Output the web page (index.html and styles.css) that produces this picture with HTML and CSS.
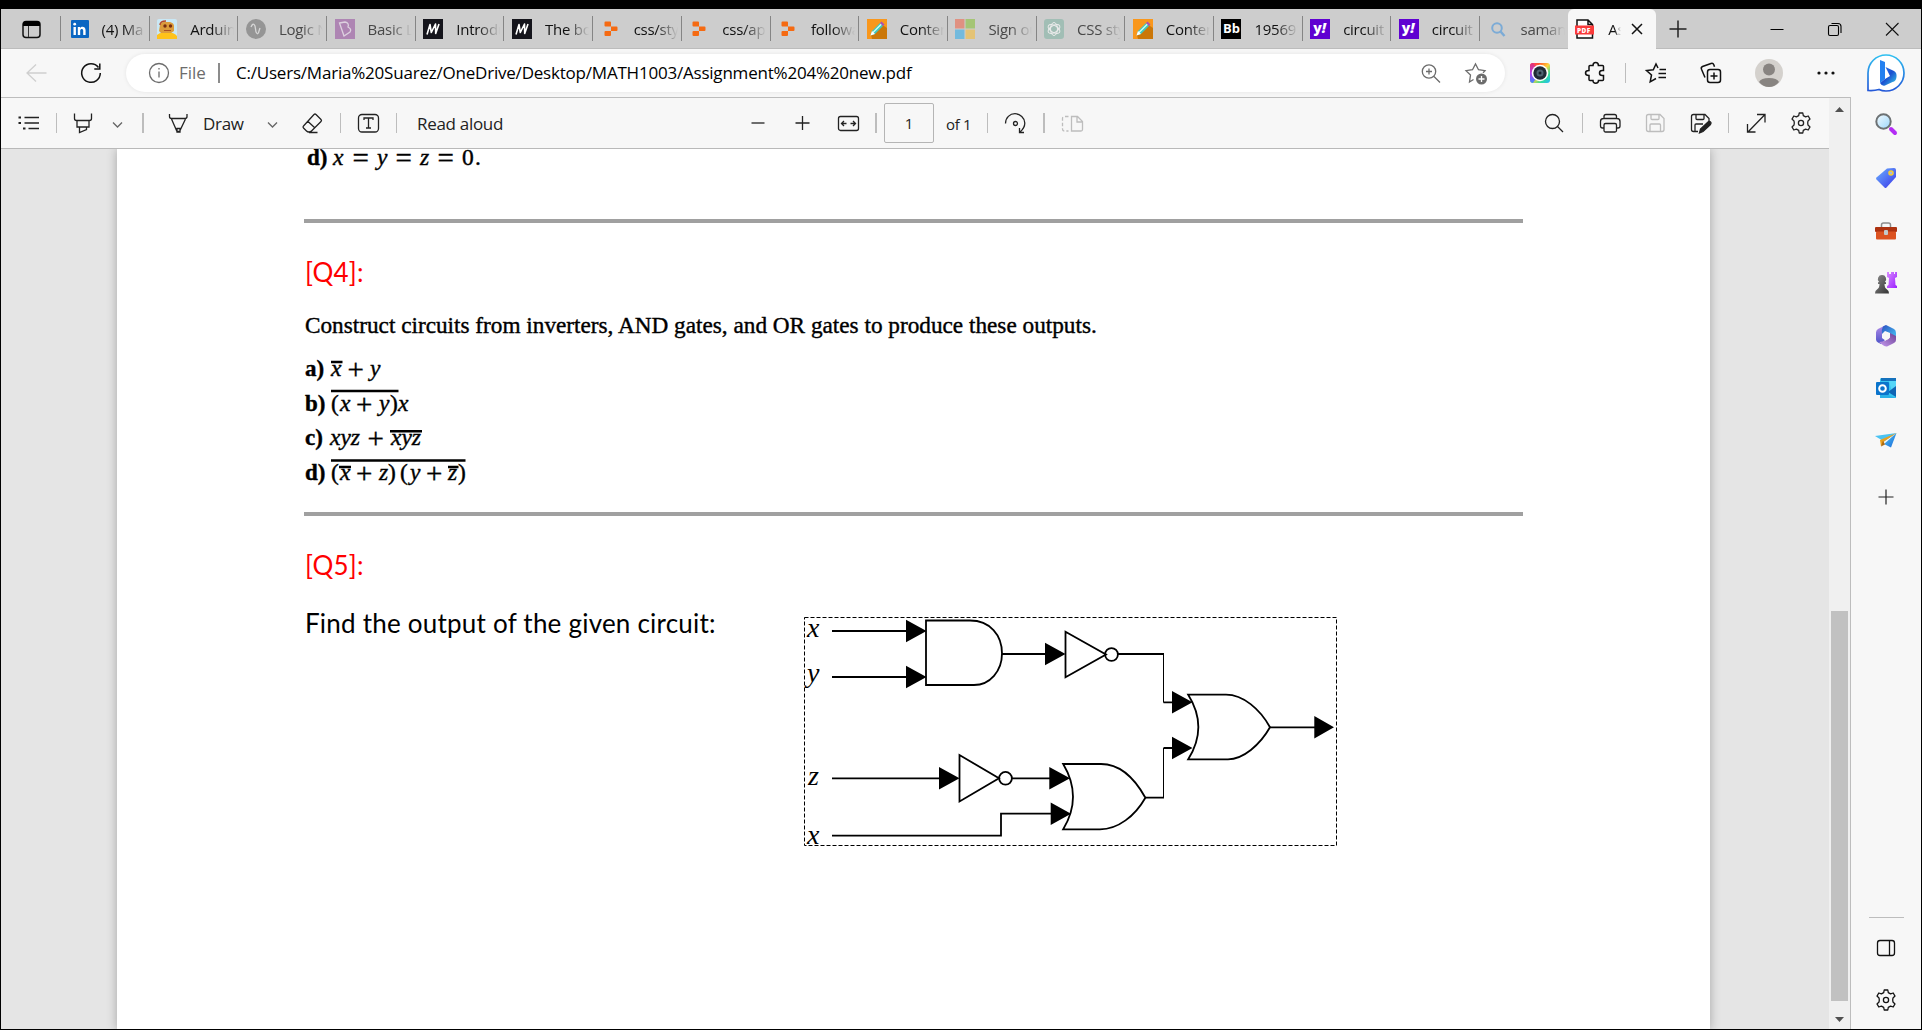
FILE: index.html
```html
<!DOCTYPE html>
<html lang="en">
<head>
<meta charset="utf-8">
<title>Assignment 4 new.pdf</title>
<link rel="stylesheet" href="styles.css">
</head>
<body>
<svg class="defs" width="0" height="0" aria-hidden="true">
  <defs>
    <linearGradient id="g-bing" x1="0" y1="0" x2="0" y2="1"><stop offset="0" stop-color="#2fc0f0"/><stop offset="1" stop-color="#2458d8"/></linearGradient>
    <linearGradient id="g-b" x1="0" y1="0" x2="1" y2="1"><stop offset="0" stop-color="#2a7df0"/><stop offset=".5" stop-color="#1b50d0"/><stop offset="1" stop-color="#38d0e8"/></linearGradient>
    <linearGradient id="g-cam" x1="0" y1="0" x2="1" y2="1"><stop offset="0" stop-color="#ff2b8a"/><stop offset=".25" stop-color="#ff5a2a"/><stop offset=".5" stop-color="#ffd23a"/><stop offset=".75" stop-color="#33dd9a"/><stop offset="1" stop-color="#22b8ff"/></linearGradient>
    <linearGradient id="g-camside" x1="0" y1="0" x2="0" y2="1"><stop offset="0" stop-color="#e8336a"/><stop offset=".55" stop-color="#b040f0"/><stop offset="1" stop-color="#3a8cff"/></linearGradient>
    <linearGradient id="g-lens" x1="0" y1="0" x2="1" y2="1"><stop offset="0" stop-color="#f4fbff"/><stop offset="1" stop-color="#9bd6fb"/></linearGradient>
    <linearGradient id="g-tag" x1="0" y1="0" x2="1" y2="1"><stop offset="0" stop-color="#6bb2ff"/><stop offset="1" stop-color="#3a35e8"/></linearGradient>
    <linearGradient id="g-pawn" x1="0" y1="0" x2="1" y2="1"><stop offset="0" stop-color="#8c8c8c"/><stop offset="1" stop-color="#333"/></linearGradient>
    <linearGradient id="g-rook" x1="0" y1="0" x2="1" y2="1"><stop offset="0" stop-color="#d98cff"/><stop offset="1" stop-color="#9a1fff"/></linearGradient>
    <linearGradient id="g-m1" x1="0" y1="0" x2="0" y2="1"><stop offset="0" stop-color="#b58ce8"/><stop offset="1" stop-color="#4a52c8"/></linearGradient>
    <linearGradient id="g-m2" x1="0" y1="0" x2="1" y2="1"><stop offset="0" stop-color="#2b4fc0"/><stop offset="1" stop-color="#47c5f5"/></linearGradient>
    <linearGradient id="g-m3" x1="0" y1="1" x2="1" y2="0"><stop offset="0" stop-color="#c79cf0"/><stop offset="1" stop-color="#6b3f95"/></linearGradient>
    <linearGradient id="g-send" x1="0" y1="0" x2="1" y2="1"><stop offset="0" stop-color="#4fc8f5"/><stop offset="1" stop-color="#1a66d8"/></linearGradient>
    <symbol id="gear" viewBox="0 0 24 24"><path d="M9.700 4.600 10.200 2h3.600l.5 2.600 2.300 1.300 2.600-.9L21 8.100l-2 1.800-.3 2.100.3 2.100 2 1.800-1.800 3.100-2.600-.9-2.300 1.300L13.800 22h-3.600l-.5-2.600-2.300-1.300-2.600.9L3 15.900l2-1.800.3-2.100L5 9.900l-2-1.800L4.800 5l2.600.9z" stroke-linejoin="round"/><circle cx="12" cy="12" r="2.600"/></symbol>
    <symbol id="pencil" viewBox="0 0 20 20"><rect width="20" height="20" fill="#f9971c"/><path d="M14 5 20 9v11H5L4 16z" fill="#cb7708"/><path d="M3.500 16.500 5 12l8-8 3 3-8 8z" fill="#40c8c0"/><path d="M6 13.500 14.500 5" stroke="#d2fff4" stroke-width="1.200"/><path d="m13 4 1.500-1.500 3 3L16 7z" fill="#a650b8"/><path d="M3.500 16.500 5 12l3 3z" fill="#fff"/></symbol>
    <symbol id="replit" viewBox="0 0 20 20"><path d="M4.500 2.500h4.500q1 0 1 1v4H4.500q-1 0-1-1v-3q0-1 1-1zM10 7.500h5.500q1 0 1 1v2.500q0 1-1 1H10zM4.500 12H10v4q0 1-1 1H4.500q-1 0-1-1v-3q0-1 1-1z" fill="#f56a12"/></symbol>
    <symbol id="medium" viewBox="0 0 20 20"><rect width="20" height="20" fill="#15151c"/><path d="m4 15.500 3-10 1.300 8L12.500 5l.2 9.500L16 5" fill="none" stroke="#fff" stroke-width="1.600" stroke-linejoin="round"/></symbol>
  </defs>
</svg>

<div class="window">
  <header class="tabs">
    <div class="tab-menu"><svg class="ic" viewBox="0 0 24 24"><rect x="4" y="4.500" width="17" height="16" rx="3" fill="none" stroke="#111" stroke-width="1.500"/><path d="M4 9V7q0-3 3-3h11q3 0 3 3v2z" fill="#000"/><path d="M9.500 9v11" stroke="#333"/></svg></div>

    <div class="tab"><svg class="fav" viewBox="0 0 20 20"><rect x="2" y="1" width="18" height="18" rx="1" fill="#0a66c2"/><path d="M4.500 8h2.400v8H4.500zM8.800 8H11v1.100c1.500-2.100 5.600-1.700 5.600 2.200V16h-2.400v-4.200c0-2.600-3-2.300-3 0V16H8.800z" fill="#fff"/><circle cx="5.700" cy="5.200" r="1.400" fill="#fff"/></svg><span class="label">(4) Ma</span></div>
    <div class="tab"><svg class="fav" viewBox="0 0 20 20"><rect width="20" height="20" rx="2" fill="#c9e8f6"/><path d="M0 16q3-3 9-2 7-2 11 3v3H0z" fill="#ffc21a"/><path d="M3 6q1-3 4-3h6q4 1 4 4v5l-3 2H4l-2-2z" fill="#dc9c3c"/><path d="M3 6q0-4 6-4" fill="none" stroke="#b64a2c" stroke-width="1.500"/><circle cx="8" cy="7" r="1.700" fill="#762d12"/><circle cx="13.500" cy="7" r="1.700" fill="#762d12"/><path d="M7 11.500h7" stroke="#a94e22"/></svg><span class="label">Arduin</span></div>
    <div class="tab asleep"><svg class="fav" viewBox="0 0 20 20"><circle cx="10" cy="10" r="10" fill="#707070"/><path d="M5 8q2-5 4-1l1 6q2 4 3-1l1-3" fill="none" stroke="#ddd" stroke-width="1.300"/></svg><span class="label">Logic N</span></div>
    <div class="tab asleep"><svg class="fav" viewBox="0 0 20 20"><rect width="20" height="20" fill="#9b56a3"/><path d="m4.500 4 5.500-1q4.500 1 3 5 4 2 2 5l-6 4zl4.500 13" fill="none" stroke="#e8d5ec" stroke-width="1.300"/></svg><span class="label">Basic L</span></div>
    <div class="tab"><svg class="fav"><use href="#medium"/></svg><span class="label">Introdu</span></div>
    <div class="tab"><svg class="fav"><use href="#medium"/></svg><span class="label">The bo</span></div>
    <div class="tab"><svg class="fav"><use href="#replit"/></svg><span class="label">css/sty</span></div>
    <div class="tab"><svg class="fav"><use href="#replit"/></svg><span class="label">css/ap</span></div>
    <div class="tab"><svg class="fav"><use href="#replit"/></svg><span class="label">followa</span></div>
    <div class="tab"><svg class="fav"><use href="#pencil"/></svg><span class="label">Conten</span></div>
    <div class="tab asleep"><svg class="fav" viewBox="0 0 20 20"><path d="M0 0h9.500v9.500H0z" fill="#ee6a50"/><path d="M10.500 0H20v9.500h-9.500z" fill="#8cc03c"/><path d="M0 10.500h9.500V20H0z" fill="#38aee8"/><path d="M10.500 10.500H20V20h-9.500z" fill="#f4bd3c"/></svg><span class="label">Sign ou</span></div>
    <div class="tab asleep"><svg class="fav" viewBox="0 0 20 20"><rect width="20" height="20" rx="3" fill="#85b5a6"/><g fill="none" stroke="#fff" stroke-width="1"><ellipse cx="10" cy="10" rx="3.500" ry="6.500"/><ellipse cx="10" cy="10" rx="3.500" ry="6.500" transform="rotate(60 10 10)"/><ellipse cx="10" cy="10" rx="3.500" ry="6.500" transform="rotate(120 10 10)"/></g></svg><span class="label">CSS sty</span></div>
    <div class="tab"><svg class="fav"><use href="#pencil"/></svg><span class="label">Conten</span></div>
    <div class="tab"><span class="fav bb">Bb</span><span class="label">195691</span></div>
    <div class="tab"><span class="fav yahoo">y<i>!</i></span><span class="label">circuit</span></div>
    <div class="tab"><span class="fav yahoo">y<i>!</i></span><span class="label">circuit</span></div>
    <div class="tab asleep"><svg class="fav" viewBox="0 0 20 20" fill="none" stroke="#4795dc" stroke-width="2"><circle cx="9" cy="9" r="4.800"/><path d="m12.500 12.500 4 4.500" stroke-width="2.500"/></svg><span class="label">saman</span></div>
    <div class="tab active"><svg class="fav" viewBox="0 0 20 20"><path d="M2 1h11l4.500 4.500V19H2zM13 1v4.500h4.500" fill="#fff" stroke="#111" stroke-width="1.500"/><rect x="0" y="6.500" width="19" height="9" fill="#fa3b3b"/><text x="2" y="13.800" class="pdf-text">PDF</text></svg><span class="label">As</span><svg class="close" viewBox="0 0 12 12"><path d="m1 1 10 10M11 1 1 11" stroke="#111" stroke-width="1.500"/></svg></div>
    <svg class="ic new-tab" viewBox="0 0 24 24"><path d="M12 3.500v17M3.500 12h17" stroke="#222" stroke-width="1.500"/></svg>
    <div class="win-controls">
      <svg class="ic" viewBox="0 0 24 24"><path d="M5.500 12.500h13" stroke="#000"/></svg>
      <svg class="ic" viewBox="0 0 24 24" fill="none" stroke="#000" stroke-width="1.100"><rect x="5.500" y="8.500" width="10" height="10" rx="1.500"/><path d="M8.500 6.500h6.500q3 0 3 3V16"/></svg>
      <svg class="ic" viewBox="0 0 24 24"><path d="m6 6 12.500 12.500M18.500 6 6 18.500" stroke="#111" stroke-width="1.100"/></svg>
    </div>
  </header>

  <div class="shell">
    <div class="main">
      <nav class="navbar">
        <svg class="ic thin faint" viewBox="0 0 24 24"><path d="M22.500 12H3.500M12 3.500 3 12l9 8.500"/></svg>
        <svg class="ic dark" viewBox="0 0 24 24"><path d="M19.500 6.500A9.300 9.300 0 1 0 21.300 12M20.800 2.500v5.500h-5.500"/></svg>
        <div class="address">
          <svg class="ic info" viewBox="0 0 24 24"><circle cx="12" cy="12" r="9.500"/><path d="M12 10.500v6M12 7v1.500"/></svg>
          <span class="scheme">File</span>
          <i class="sep dim"></i>
          <span class="url">C:/Users/Maria%20Suarez/OneDrive/Desktop/MATH1003/Assignment%204%20new.pdf</span>
          <svg class="ic info" viewBox="0 0 24 24"><circle cx="10" cy="10.500" r="6.700"/><path d="M10 7.500v6M7 10.500h6M15 15.500l6 6"/></svg>
          <svg class="ic info" viewBox="0 0 24 24"><path d="M9.500 18.500 5.500 21l1-7L2 9.700l6.500-1L11.500 3l3 5.700 6.500 1-2 2"/><circle cx="17.500" cy="18" r="5.500" fill="#6c6c6c" stroke="none"/><path d="M17.500 15v6M14.500 18h6" stroke="#fff"/></svg>
        </div>
        <svg class="ic" viewBox="0 0 24 24"><rect x="2" y="2" width="20" height="20" rx="3" fill="url(#g-cam)"/><path d="M2 5q0-3 3-3l7 10-7 10q-3 0-3-3z" fill="url(#g-camside)"/><circle cx="12" cy="12" r="8.300" fill="#fff"/><circle cx="12" cy="12" r="6.700" fill="#202a36"/><circle cx="12" cy="12" r="3.500" fill="#4e6272"/><circle cx="12" cy="12" r="1.500" fill="#18222c"/></svg>
        <svg class="ic dark" viewBox="0 0 24 24"><path d="M9 4.500h1q0-3 2.700-3t2.700 3h4.100q1 0 1 1v4h-1.300q-2.700 0-2.700 2.500t2.700 2.500h1.300v4q0 1-1 1h-4q0 2.700-2.800 2.700T10 19.500H7q-1 0-1-1v-4q-3.500 0-3.500-2.500T6 9.500v-4q0-1 1-1z"/></svg>
        <i class="sep pale"></i>
        <svg class="ic dark" viewBox="0 0 24 24"><path d="m14 7-2-4-2.700 5.700-6.800.8 5 4.500-1.300 6.800L12 17.500M15.500 8.500H22M14.500 12.500H22M14.500 16.500H22"/></svg>
        <svg class="ic dark" viewBox="0 0 24 24"><rect x="8.500" y="8.500" width="13" height="13" rx="2.500"/><path d="M15 11.500v7M11.500 15h7M6 16.500 2.500 8.300q-.8-2 1-2.800l8.500-3q2-.7 2.800 1.200l.7 2"/></svg>
        <svg class="avatar" viewBox="0 0 28 28"><circle cx="14" cy="14" r="14" fill="#d4d1cd"/><circle cx="14" cy="10.500" r="6" fill="#888481"/><path d="M4 23q2-4 10-4t10 4q-4 5-10 5T4 23z" fill="#888481"/></svg>
        <svg class="ic" viewBox="0 0 24 24" fill="#111"><circle cx="5" cy="12" r="1.600"/><circle cx="12" cy="12" r="1.600"/><circle cx="19" cy="12" r="1.600"/></svg>
      </nav>

      <div class="viewer">
        <div class="pane">
          <div class="toolbar">
            <svg class="ic tool" viewBox="0 0 24 24"><path d="M7.500 6.500H22M7.500 12H22M11.500 17.500H22"/><path d="M1.500 6.500h2.500M1.500 12h2.500M6 17.500h2.500" stroke-width="2.200"/></svg>
            <i class="sep pale"></i>
            <svg class="ic tool" viewBox="0 0 24 24"><path d="M3.500 2.500v5q0 2 2 2h13q2 0 2-2v-5M6 9.500v6.500h12V9.500M8.500 16v5.500l7-3V16"/></svg>
            <svg class="chev" viewBox="0 0 16 16"><path d="m4 6.500 4.500 4.500L13 6.500"/></svg>
            <i class="sep pale wide"></i>
            <svg class="ic tool" viewBox="0 0 24 24"><path d="M3.500 3v2.500q0 2 2 2h13.500q2 0 2-2V3M5.500 8l5.500 12.500h2.500L19.500 8M11 17.500h3V21h-3z"/></svg>
            <span class="lbl">Draw</span>
            <svg class="chev" viewBox="0 0 16 16"><path d="m4 6.500 4.500 4.500L13 6.500"/></svg>
            <svg class="ic tool" viewBox="0 0 24 24"><path d="M14 3.500q1-1 2 0l5 5q1 1 0 2L11.500 20q-1 1-2.500 1t-2.500-1l-3-3q-1-1 0-2zM7.500 10l7.500 7M9 21.500h8.500"/></svg>
            <i class="sep pale"></i>
            <svg class="ic tool" viewBox="0 0 24 24"><rect x="2.500" y="3.500" width="20" height="17.500" rx="3.500"/><path d="M8 9V7h9v2M12.500 7v10M10 17h5"/></svg>
            <i class="sep pale"></i>
            <span class="lbl">Read aloud</span>
            <svg class="ic tool" viewBox="0 0 24 24"><path d="M5.500 12h13"/></svg>
            <svg class="ic tool" viewBox="0 0 24 24"><path d="M12.500 5v14M5.500 12h14"/></svg>
            <svg class="ic tool" viewBox="0 0 24 24"><rect x="2.500" y="5.500" width="20" height="14" rx="2"/><path d="M10.500 12.500h-5M8 10l-2.500 2.500L8 15M14.500 12.500h5M17 10l2.500 2.500L17 15"/></svg>
            <i class="sep pale wide"></i>
            <span class="page-no">1</span>
            <span class="lbl small">of 1</span>
            <i class="sep pale"></i>
            <svg class="ic tool" viewBox="0 0 24 24"><path d="M2.500 12.500C2.500 6.500 7 2.700 12 2.700s9.800 4.300 9.800 9.300q0 5-4.800 9M21 21.500h-4.500V17"/><circle cx="12.500" cy="12.500" r="2"/></svg>
            <i class="sep pale wide"></i>
            <svg class="ic tool off" viewBox="0 0 24 24"><path d="M11.500 5.500h6l5 5v8q0 1.500-1.500 1.500h-9.500zM17 5.500v5.500h5"/><path d="M8.500 5.500H4.500q-2 0-2 2V18q0 2 2 2h4" stroke-dasharray="3.500 2"/></svg>
            <svg class="ic tool" viewBox="0 0 24 24"><circle cx="10.500" cy="10.500" r="7"/><path d="m15.500 15.500 5.500 5.500"/></svg>
            <i class="sep pale"></i>
            <svg class="ic tool" viewBox="0 0 24 24"><path d="M6 7.500V5.500q0-2 2-2h8.500q2 0 2 2v2M6 17H4.500q-2 0-2-2v-4.500q0-3 3-3h13.500q3 0 3 3V15q0 2-2 2H18.500"/><rect x="6" y="12.500" width="12.500" height="8.500" rx="1.500"/></svg>
            <svg class="ic tool off" viewBox="0 0 24 24"><path d="M5.500 3.500H17l4 4V18.500q0 2-2 2H5.500q-2 0-2-2v-13q0-2 2-2zM8 3.500v4q0 1 1 1h6q1 0 1-1v-4M7 20.500V14q0-1 1-1h8.500q1 0 1 1v6.500"/></svg>
            <svg class="ic tool" viewBox="0 0 24 24"><path d="M10 20.500H5.500q-2 0-2-2v-13q0-2 2-2H17l4 4v4M8 3.500v4q0 1 1 1h6q1 0 1-1v-4M7 20.500V14q0-1 1-1h7"/><path d="m11.500 22 1-4L20 11q1.500-1 2.500 0t0 2.500l-7.500 7z" fill="#222"/></svg>
            <i class="sep pale"></i>
            <svg class="ic tool" viewBox="0 0 24 24"><path d="M4 21 20.500 4M13 3.500h8v8M3.500 13v8h8"/></svg>
            <svg class="ic tool"><use href="#gear"/></svg>
          </div>

          <div class="canvas">
            <article class="page">
              <svg class="formula top" viewBox="304 149 300 30" width="300" height="30"><text y="165"><tspan class="b" x="307">d)</tspan><tspan class="m" x="333">x</tspan><tspan class="op" x="352.500">=</tspan><tspan class="m" x="377">y</tspan><tspan class="op" x="395.500">=</tspan><tspan class="m" x="420">z</tspan><tspan class="op" x="437.500">=</tspan><tspan x="462">0</tspan><tspan x="475">.</tspan></text></svg>
              <hr>
              <h2>[Q4]:</h2>
              <p class="construct">Construct circuits from inverters, AND gates, and OR gates to produce these outputs.</p>
              <svg class="formula list" viewBox="304 350 300 150" width="300" height="150">
                <text y="376"><tspan class="b" x="305">a)</tspan><tspan class="m" x="331">x</tspan><tspan class="op" x="347.500">+</tspan><tspan class="m" x="370">y</tspan></text>
                <text y="411"><tspan class="b" x="305">b)</tspan><tspan x="331">(</tspan><tspan class="m" x="340">x</tspan><tspan class="op" x="356">+</tspan><tspan class="m" x="379">y</tspan><tspan x="390">)</tspan><tspan class="m" x="398">x</tspan></text>
                <text y="445"><tspan class="b" x="305">c)</tspan><tspan class="m" x="330">xyz</tspan><tspan class="op" x="367.500">+</tspan><tspan class="m" x="391">xyz</tspan></text>
                <text y="480"><tspan class="b" x="305">d)</tspan><tspan x="331">(</tspan><tspan class="m" x="340">x</tspan><tspan class="op" x="356">+</tspan><tspan class="m" x="379">z</tspan><tspan x="388">)</tspan><tspan x="400">(</tspan><tspan class="m" x="410">y</tspan><tspan class="op" x="426">+</tspan><tspan class="m" x="448">z</tspan><tspan x="458">)</tspan></text>
                <path d="M331 362h11.500M331 391h67.500M390 431.300h32M339 467h12M448 467h10.500M331 460.500h134.500"/>
              </svg>
              <hr>
              <h2>[Q5]:</h2>
              <div class="question">
                <p>Find the output of the given circuit:</p>
                <svg class="circuit" viewBox="0 0 560 260" width="560" height="260">
                  <rect class="frame" x="14.500" y="17.500" width="532" height="228"/>
                  <g class="wires">
                    <path d="M42 31h76M42 77h76M212 54h44M328 54h46M373.500 102.300h10M480 127.300h46M355.400 197.700h18.600M373.500 148h10M42 178.300h110M222 178.300h38M42 235.700h169V213.700h50"/>
                    <path class="fine" d="M373.500 54v48.500M373.500 198V148"/>
                    <path d="M136 20.500H180C200 20.500 212 35 212 53.500C212 71 200 85 184 85H136ZM275.500 31.700V77.300L316 54.500ZM169.500 155V201.500L209 178.300Z"/>
                    <path d="M398.200 94.700H436C453 94.700 470 109 480 127.300C470 145 453 159.300 438 159.300H398.200Q418.500 127 398.200 94.700ZM273.200 164H311C330 164 345 179 355.400 197.700C345 216 328 229.300 310 229.300H273.200Q292.800 197 273.200 164Z"/>
                    <circle cx="321.500" cy="54.500" r="6.400"/><circle cx="215.500" cy="178.300" r="6.400"/>
                  </g>
                  <path d="M116 19.700v22.600L136.500 31zM116 65.700v22.600L136.500 77zM255 42.700v22.600L275.500 54zM382 91v22.600L402.500 102.300zM382 136.700v22.600L402.500 148zM524.300 116v22.600L544 127.300zM149 167v22.600L169.500 178.300zM259.300 167v22.600L280 178.300zM260.700 202.400v22.600L281 213.700z"/>
                  <text x="17" y="36.500">x</text><text x="17" y="81.500">y</text><text x="18" y="185">z</text><text x="17" y="243.500">x</text>
                </svg>
              </div>
            </article>
          </div>
        </div>
        <div class="scrollbar">
          <svg viewBox="0 0 21 22"><path d="M6 14h9L10.500 9z" fill="#505050"/></svg>
          <div class="thumb"></div>
          <svg viewBox="0 0 21 22"><path d="M6 10h9l-4.500 5z" fill="#505050"/></svg>
        </div>
      </div>
    </div>

    <aside class="sidebar">
      <svg class="bing" viewBox="0 0 40 40"><path d="M2 37.500V20A18 18 0 1 1 20 38Q16 38 13 36.500Q8 38 2 37.500z" fill="#fff" stroke="url(#g-bing)" stroke-width="1.700"/><path d="M14 7l5 2v17l-5 4z" fill="#2480f0"/><path d="M14 30l5-4 5-3-3-6-1.500-3L28 18q3 1.500 2.500 6t-4 5L19 32.500q-3 1-5-2.500z" fill="url(#g-b)"/></svg>
      <svg class="side search" viewBox="0 0 24 24"><path d="m17 17 4 4" stroke="#b42cf5" stroke-width="4" stroke-linecap="round"/><circle cx="9.500" cy="9.500" r="7.200" fill="url(#g-lens)" stroke="#6d7274" stroke-width="2"/></svg>
      <svg class="side" viewBox="0 0 24 24"><path d="M13 2.500 20 2q2 0 2 2v7l-9.500 10.500q-1 1-2 0l-8-8q-1-1 0-2z" fill="url(#g-tag)"/><circle cx="17" cy="7" r="2" fill="#a7b9d8" stroke="#f5cc35" stroke-width="1.600"/></svg>
      <svg class="side" viewBox="0 0 24 24"><path d="M7.500 8V6q0-2 2-2h5q2 0 2 2v2" fill="none" stroke="#8c8c8c" stroke-width="1.500"/><rect x="1" y="8" width="22" height="5" rx="1" fill="#ad3210"/><rect x="2" y="12.500" width="20" height="8" rx="1" fill="#dc5220"/><rect x="10" y="11" width="4" height="5" rx="1" fill="#c3c9ca"/></svg>
      <svg class="side" viewBox="0 0 24 24"><path d="M13 1h2v2h2V1h3v2h1V1h2v5l-2 1 .5 7 1.500 1v2H13v-2l1.500-1 .500-7-2-1z" fill="url(#g-rook)"/><path d="M8 4a4 4 0 0 1 3 6.800l1 .7v1.500h-1.500q0 4 2.500 5.500 2 1 2 4H1q0-3 2-4 2.500-1.500 2.500-5.500H4v-1.500l1-.7A4 4 0 0 1 8 4z" fill="url(#g-pawn)"/></svg>
      <svg class="side" viewBox="0 0 24 24"><path d="M12 1 4 5Q2 6 2 8.500v7q0 2 2 3l3 1.500 4-4-3-2V9z" fill="url(#g-m1)"/><path d="M9 2.500 12 1l8 4q2 1 2 4v5l-6-3V9l-5-2-3 3q-1-4 1-7.500z" fill="url(#g-m2)"/><path d="M22 12v4q0 2-2 3l-7 3.500q-2 .5-5-2L5 18l6-1 5-3.500V9z" fill="url(#g-m3)"/><circle cx="12" cy="12" r="3.800" fill="#f7f7f7"/></svg>
      <svg class="side" viewBox="0 0 24 24"><path d="M7 2h15v20H6V3z" fill="#36c5f0"/><path d="M7 2h15v3H7z" fill="#1572bd"/><path d="M15 5h7v8l-4 3z" fill="#55d6f8"/><path d="m22 10-8 6 8 5z" fill="#0f64b4"/><path d="m6 16 16 6H6z" fill="#2ab1e8"/><rect x="2" y="6" width="13" height="13" rx="1" fill="#0b74cc"/><circle cx="8.500" cy="12.500" r="3.300" fill="none" stroke="#fff" stroke-width="2"/></svg>
      <svg class="side" viewBox="0 0 24 24"><path d="m1 7 21.500-3L10 12.500z" fill="#4bc3f2"/><path d="M22.500 4 17 18.500l-7-3.500z" fill="url(#g-send)"/><path d="M22.500 4 6 11l1 6.500 3-5z" fill="#eba01c"/><path d="m7 17.500 2-6 2 4z" fill="#ad6a12"/></svg>
      <svg class="side add" viewBox="0 0 24 24"><path d="M12 4.500v15M4.500 12h15" stroke="#222" stroke-width="1.200"/></svg>
      <i class="divider"></i>
      <svg class="side line" viewBox="0 0 24 24"><rect x="3.500" y="4.500" width="17" height="15" rx="2.500"/><path d="M15.500 5v14.500"/></svg>
      <svg class="side line last"><use href="#gear"/></svg>
    </aside>
  </div>
</div>
</body>
</html>
```
FILE: styles.css
```css
* { box-sizing: border-box; }

body {
  margin: 0;
  font-family: "Open Sans", "Noto Sans", sans-serif;
  color: #222;
}

.defs { position: absolute; }

.window {
  width: 1922px;
  height: 1030px;
  display: flex;
  flex-direction: column;
  overflow: hidden;
  background: #f7f7f7;
  border: 1px solid #000;
  border-top-width: 9px;
}

.ic { width: 24px; height: 24px; display: block; }

/* Tab strip */
.tabs {
  height: 40px;
  flex: none;
  display: flex;
  align-items: center;
  background: #cdcdcd;
  border-bottom: 1px solid #bcbcbc;
}
.tab-menu { width: 59px; padding-left: 17.5px; }
.tab {
  width: 88.7px;
  height: 25px;
  flex: none;
  display: flex;
  align-items: center;
  border-left: 1.5px solid #858585;
  padding-left: 7.5px;
}
.fav { width: 20px; height: 20px; flex: none; }
.label {
  width: 44px;
  margin-left: 13px;
  overflow: hidden;
  white-space: nowrap;
  font-size: 15px;
  line-height: 24px;
  letter-spacing: -0.25px;
  color: #111;
  -webkit-mask-image: linear-gradient(90deg, #000 50%, transparent 100%);
  mask-image: linear-gradient(90deg, #000 50%, transparent 100%);
}
.asleep .fav { opacity: .6; }
.asleep .label { color: #484848; }
.bb {
  background: #000;
  color: #fff;
  font-size: 13px;
  font-weight: 700;
  line-height: 19px;
  text-align: center;
}
.yahoo {
  background: #5f01d1;
  color: #fff;
  font-size: 14px;
  font-weight: 800;
  line-height: 17px;
  padding-left: 3px;
}
.tab.active {
  height: 40px;
  align-self: flex-start;
  background: #f7f7f7;
  border-left: 0;
  border-radius: 6px 6px 0 0;
}
.active .label { width: 13px; }
.pdf-text { font: 800 6.5px "Open Sans", sans-serif; fill: #fff; letter-spacing: .4px; }
.close { width: 12px; height: 12px; margin-left: 9.5px; }
.new-tab { margin-left: 10px; }
.win-controls { display: flex; gap: 33.5px; margin-left: auto; padding-right: 17px; }

/* Body below the tabs */
.shell { flex: 1; display: flex; min-height: 0; }
.main { width: 1850px; display: flex; flex-direction: column; }

.navbar {
  height: 49px;
  flex: none;
  display: grid;
  grid-template-columns: 55px 47px 1402px 55px 42px 19px 55px 56px 59px 24px;
  align-items: center;
  padding-left: 23px;
  border-bottom: 1px solid #bdbdbd;
}
.ic.dark, .ic.tool, .ic.info, .ic.thin, .chev, .line { fill: none; stroke: #222; stroke-width: 1.3px; }
.ic.dark { stroke: #111; stroke-width: 1.5px; }
.ic.info { stroke: #6c6c6c; }
.ic.faint { stroke: #cfcfcf; }
.ic.off { stroke: #bdbdbd; }
.avatar { width: 28px; height: 28px; }

.address {
  width: 1379px;
  height: 38px;
  display: grid;
  grid-template-columns: 32px 39px 18px 1183px 45px auto;
  align-items: center;
  padding-left: 21px;
  background: #fff;
  border-radius: 19px;
  box-shadow: 0 0 4px rgba(0, 0, 0, .08);
}
.scheme, .url { font-size: 17px; line-height: 24px; white-space: nowrap; }
.scheme { color: #6c6c6c; }
.url { color: #000; letter-spacing: -0.21px; }

.sep { width: 1px; height: 20px; background: #bdbdbd; }
.sep.wide { width: 2px; }
.sep.dim { width: 2px; background: #8c8c8c; }

/* PDF viewer */
.viewer { flex: 1; display: flex; min-height: 0; border-right: 1px solid #bdbdbd; }
.pane { width: 1828px; display: flex; flex-direction: column; }
.toolbar {
  height: 51px;
  flex: none;
  display: grid;
  grid-template-columns: 39px 15px 38px 33px 24px 37px 61px 36px 40px 16px 40px 21px 329px 44px 46px 39px 9px 62px 41px 16px 40px 17px 482px 40px 16px 45px 45px 40px 16px 45px auto;
  align-items: center;
  padding-left: 16px;
  border-bottom: 1px solid #b9b9b9;
}
.chev { width: 16px; height: 16px; stroke: #666; margin-top: 2px; }
.lbl { font-size: 17px; line-height: 24px; letter-spacing: -0.3px; white-space: nowrap; padding-top: 1px; }
.lbl.small { font-size: 15px; }
.page-no {
  width: 50px;
  height: 40px;
  border: 1px solid #b5b5b5;
  border-radius: 2px;
  font-size: 15px;
  line-height: 39px;
  text-align: center;
}

.canvas { flex: 1; min-height: 0; background: #e5e5e5; padding-left: 116px; overflow: hidden; }
.page {
  width: 1593px;
  height: 881px;
  padding-left: 187px;
  background: #fff;
  box-shadow: 0 0 10px rgba(0, 0, 0, .28);
}
.page hr {
  width: 1219px;
  height: 4px;
  margin: 0;
  border: 0;
  background: #a0a0a0;
}
.page h2, .question p {
  margin: 0;
  padding-left: 1px;
  font-family: Lato, sans-serif;
  font-weight: 400;
  font-size: 26px;
  line-height: 30px;
  letter-spacing: 0.22px;
}
.page h2 { color: #f00; margin-top: 34px; }

.formula { display: block; font-family: "Liberation Serif", serif; font-size: 23.5px; fill: #000; }
.formula text { stroke: #000; stroke-width: .4px; }
.formula path { stroke: #000; stroke-width: 2.4px; }
.formula .b { font-weight: 700; font-size: 23px; }
.formula .m { font-style: italic; }
.formula .op { font-size: 29px; baseline-shift: -2.5px; }
.formula.top { margin-bottom: 40px; }
.formula.list { margin-bottom: 12px; }

.construct {
  margin: 23px 0 10px 1px;
  font-family: "Liberation Serif", serif;
  font-size: 23.24px;
  line-height: 30px;
  color: #000;
  -webkit-text-stroke: .4px #000;
  white-space: nowrap;
}

.question { display: flex; }
.question p { width: 486px; padding-top: 28px; color: #000; white-space: nowrap; }
.circuit { font: italic 28px "Liberation Serif", serif; margin-top: 20px; }
.circuit .frame { fill: none; stroke: #000; stroke-dasharray: 4 2; }
.circuit .wires { fill: none; stroke: #000; stroke-width: 1.8px; }
.circuit .fine { stroke-width: 1px; }

.scrollbar {
  width: 21px;
  display: flex;
  flex-direction: column;
  align-items: center;
  background: #f0f0f0;
}
.scrollbar svg { width: 21px; height: 22px; }
.thumb { width: 17px; height: 390px; margin-top: auto; margin-bottom: 6px; background: #c1c1c1; }

/* Sidebar */
.sidebar { width: 70px; display: flex; flex-direction: column; align-items: center; }
.bing { width: 40px; height: 40px; margin: 4px 0 19px; flex: none; }
.side { width: 24px; height: 24px; flex: none; margin-bottom: 28.5px; }
.side.search { margin-bottom: 30px; }
.add { margin-top: 4px; }
.divider { width: 35px; height: 1px; margin-top: auto; background: #bdbdbd; }
.line { stroke: #111; margin-top: 18px; margin-bottom: 0; }
.line.last { margin: 28px 0 17px; }
```
